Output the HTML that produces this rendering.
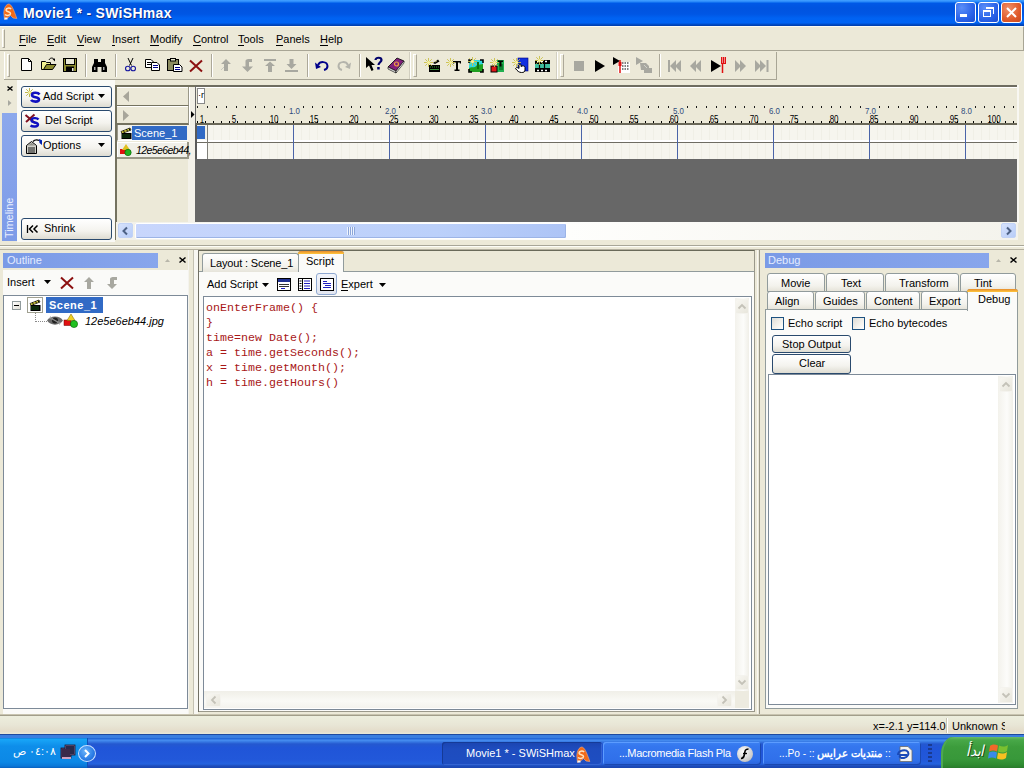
<!DOCTYPE html>
<html><head><meta charset="utf-8">
<style>
*{margin:0;padding:0;box-sizing:border-box}
body{width:1024px;height:768px;overflow:hidden;position:relative;background:#ECE9D8;font-family:"Liberation Sans",sans-serif;font-size:11px;color:#000}
.a{position:absolute}
.t{position:absolute;white-space:pre;line-height:1}
u{text-decoration:none;background:linear-gradient(#000,#000) no-repeat 0 100%/100% 1px;padding-bottom:1px}
svg{position:absolute;overflow:visible}
</style></head><body>
<!-- TITLE BAR -->
<div class="a" style="left:0;top:0;width:1024px;height:26px;background:linear-gradient(#3D9DFF 0px,#3A98FF 1px,#1070F0 2.5px,#0058E6 3.5px,#0054E0 8px,#0056E4 14px,#0062F2 18px,#0064F4 23px,#0050D0 24px,#003CA8 26px)"></div>
<svg style="left:3px;top:3px" width="15" height="17" viewBox="0 0 15 17">
<path d="M6 1 C8.5 1.5 10.5 6 13.8 15.5 L10 15 L7.5 12.5 L4.5 15 L1.5 16.5 L0.8 10 C1 5 3 1 6 1 Z" fill="#F26A18" stroke="#F8B080" stroke-width="0.6"/>
<path d="M8.2 6 C6.5 4.5 3 5 3 7 C3 9 7.5 8.5 7.5 10.5 C7.5 12.5 3.5 13 2 11.5" fill="none" stroke="#FFE4C0" stroke-width="1.5"/>
<path d="M1.5 14.5 H4.5 V16.5 H1.5 Z" fill="#F0F8FF"/>
</svg>
<div class="t" style="left:23px;top:6px;font-size:14px;font-weight:bold;color:#fff;letter-spacing:0.3px;text-shadow:1px 1px #0A2F8C">Movie1 * - SWiSHmax</div>
<!-- min -->
<div class="a" style="left:955px;top:2px;width:21px;height:21px;border:1px solid #fff;border-radius:3px;background:radial-gradient(circle at 30% 25%,#5A8EF8,#2A62E8 60%,#1A4CD0)"></div>
<div class="a" style="left:960px;top:14px;width:7px;height:3px;background:#fff"></div>
<!-- max -->
<div class="a" style="left:978px;top:2px;width:21px;height:21px;border:1px solid #fff;border-radius:3px;background:radial-gradient(circle at 30% 25%,#5A8EF8,#2A62E8 60%,#1A4CD0)"></div>
<div class="a" style="left:983px;top:10px;width:8px;height:7px;border:1px solid #fff;border-top-width:2px"></div>
<div class="a" style="left:986px;top:7px;width:8px;height:7px;border:1px solid #fff;border-top-width:2px;border-left:none;border-bottom:none"></div>
<!-- close -->
<div class="a" style="left:1001px;top:2px;width:21px;height:21px;border:1px solid #fff;border-radius:3px;background:radial-gradient(circle at 35% 30%,#F0906A,#E05A2A 60%,#C84A20)"></div>
<svg class="a" style="left:1001px;top:2px" width="21" height="21"><path d="M6 6 L15 15 M15 6 L6 15" stroke="#fff" stroke-width="2"/></svg>

<!-- MENU BAR -->
<div class="a" style="left:0;top:26px;width:1024px;height:25px;background:#ECE9D8;border-top:1px solid #FAFAF2;border-bottom:1px solid #A8A595;border-right:1px solid #A8A595"></div>
<div class="a" style="left:2px;top:29px;width:3px;height:19px;border-left:1px solid #fff;border-top:1px solid #fff;border-right:1px solid #ACA899;border-bottom:1px solid #ACA899"></div>
<div class="t" style="left:19px;top:34px"><u>F</u>ile</div>
<div class="t" style="left:47px;top:34px"><u>E</u>dit</div>
<div class="t" style="left:77px;top:34px"><u>V</u>iew</div>
<div class="t" style="left:112px;top:34px"><u>I</u>nsert</div>
<div class="t" style="left:150px;top:34px"><u>M</u>odify</div>
<div class="t" style="left:193px;top:34px"><u>C</u>ontrol</div>
<div class="t" style="left:238px;top:34px"><u>T</u>ools</div>
<div class="t" style="left:276px;top:34px"><u>P</u>anels</div>
<div class="t" style="left:320px;top:34px"><u>H</u>elp</div>
<!-- TOOLBAR -->
<div class="a" style="left:0;top:52px;width:1024px;height:28px;background:#ECE9D8"></div>
<div class="a" style="left:4px;top:79px;width:773px;height:1px;background:#A8A595"></div>
<div class="a" style="left:4px;top:52px;width:1px;height:27px;background:#fff"></div>
<!-- toolbar 1 frame -->
<div class="a" style="left:4px;top:52px;width:406px;height:27px;border-right:1px solid #D2CFC0"></div>
<div class="a" style="left:7px;top:54px;width:3px;height:23px;border-left:1px solid #fff;border-top:1px solid #fff;border-right:1px solid #ACA899;border-bottom:1px solid #ACA899"></div>
<div class="a" style="left:85px;top:54px;width:2px;height:23px;border-left:1px solid #ACA899;border-right:1px solid #fff"></div>
<div class="a" style="left:115px;top:54px;width:2px;height:23px;border-left:1px solid #ACA899;border-right:1px solid #fff"></div>
<div class="a" style="left:211px;top:54px;width:2px;height:23px;border-left:1px solid #ACA899;border-right:1px solid #fff"></div>
<div class="a" style="left:307px;top:54px;width:2px;height:23px;border-left:1px solid #ACA899;border-right:1px solid #fff"></div>
<div class="a" style="left:359px;top:54px;width:2px;height:23px;border-left:1px solid #ACA899;border-right:1px solid #fff"></div>
<!-- new -->
<svg style="left:21px;top:58px" width="12" height="14"><path d="M0.5 0.5 H7.5 L10.5 3.5 V12.5 H0.5 Z" fill="#fff" stroke="#000"/><path d="M7.5 0.5 V3.5 H10.5" fill="none" stroke="#000"/></svg>
<!-- open -->
<svg style="left:41px;top:57px" width="16" height="15"><path d="M0.5 4.5 H4.5 L5.5 5.5 H9.5 V12.5 H0.5 Z" fill="#F0F090" stroke="#000"/><path d="M2.5 12.5 L5.5 7.5 H15 L11.5 12.5 Z" fill="#8C8C30" stroke="#000"/><path d="M8 3 C9 0.5 12 0.5 13 2.5" fill="none" stroke="#000"/><path d="M11.5 2 L14 4.5 L14 1.5 Z" fill="#000"/></svg>
<!-- save -->
<svg style="left:63px;top:58px" width="14" height="14"><rect x="0.5" y="0.5" width="13" height="13" fill="#8C8C30" stroke="#000"/><rect x="2.5" y="0.5" width="9" height="6" fill="#E8E8D8" stroke="#000"/><rect x="3" y="8.5" width="8" height="5" fill="#000"/><rect x="9" y="10" width="1.6" height="3" fill="#E8E8D8"/></svg>
<!-- find -->
<svg style="left:92px;top:59px" width="15" height="13"><path d="M2 0 H6 V3 H9 V0 H13 V4 L15 8 V13 H9.5 V8 H5.5 V13 H0 V8 L2 4 Z" fill="#000"/><rect x="2" y="8" width="1.5" height="3" fill="#aaa"/><rect x="11" y="8" width="1.5" height="3" fill="#aaa"/></svg>
<!-- cut -->
<svg style="left:125px;top:58px" width="11" height="14"><path d="M3 0 L6.5 7.5 M8 0 L4.5 7.5" stroke="#000" stroke-width="1"/><circle cx="2.8" cy="10.5" r="2.3" fill="none" stroke="#1818A0" stroke-width="1.1"/><circle cx="8.2" cy="10.5" r="2.3" fill="none" stroke="#1818A0" stroke-width="1.1"/></svg>
<!-- copy -->
<svg style="left:145px;top:59px" width="16" height="12"><path d="M0.5 0.5 H6 L8.5 3 V8.5 H0.5 Z" fill="#fff" stroke="#000"/><path d="M2 3.5 H6 M2 5.5 H6" stroke="#000"/><path d="M6.5 3.5 H12 L14.5 6 V11.5 H6.5 Z" fill="#fff" stroke="#000"/><path d="M8 6.5 H13 M8 8.5 H13" stroke="#00008A"/></svg>
<!-- paste -->
<svg style="left:167px;top:58px" width="16" height="14"><rect x="0.5" y="1.5" width="11" height="11" fill="#8C8C60" stroke="#000"/><rect x="3.5" y="0.5" width="5" height="2.5" fill="#E8E8D0" stroke="#000"/><path d="M6.5 6.5 H12.5 L15 9 V13.5 H6.5 Z" fill="#fff" stroke="#000"/><path d="M8 9.5 H13 M8 11.5 H13" stroke="#00008A"/></svg>
<!-- delete -->
<svg style="left:189px;top:60px" width="14" height="12"><path d="M1 0.5 L13 11.5 M13 0.5 L1 11.5" stroke="#8C1010" stroke-width="2"/></svg>
<!-- up/down/top/bottom gray -->
<svg style="left:220px;top:59px" width="12" height="13"><path d="M6 0 L11 5 H8 V12 H4 V5 H1 Z" fill="#A8A8A0"/><path d="M4 8 L1 11" stroke="#C8C8C0"/></svg>
<svg style="left:241px;top:59px" width="13" height="13"><path d="M6.5 13 L1 7.5 H4.5 V2 C4.5 0.5 6 0 9 0 H11 V3 H8 V7.5 H12 Z" fill="#A8A8A0"/></svg>
<svg style="left:264px;top:59px" width="12" height="13"><rect x="0" y="0" width="12" height="2" fill="#A8A8A0"/><path d="M6 2.5 L11 7 H8 V13 H4 V7 H1 Z" fill="#A8A8A0"/></svg>
<svg style="left:285px;top:59px" width="13" height="13"><path d="M6.5 10 L1.5 5 H4.5 V0 H8.5 V5 H11.5 Z" fill="#A8A8A0"/><rect x="0" y="11" width="13" height="2" fill="#A8A8A0"/></svg>
<!-- undo/redo -->
<svg style="left:315px;top:60px" width="14" height="11"><path d="M3 5 C5 1 12 1 12.5 6 C12.5 8 11 9.5 9 10" fill="none" stroke="#00008A" stroke-width="2"/><path d="M0 2.5 L1 9 L6 7 Z" fill="#00008A"/></svg>
<svg style="left:337px;top:60px" width="14" height="11"><path d="M11 5 C9 1 2 1 1.5 6 C1.5 8 3 9.5 5 10" fill="none" stroke="#B4B4AC" stroke-width="2"/><path d="M14 2.5 L13 9 L8 7 Z" fill="#B4B4AC"/></svg>
<!-- help cursor -->
<svg style="left:366px;top:57px" width="17" height="16"><path d="M0 0 L0 11 L3 8.5 L5.5 14 L7.5 13 L5.5 8 H9 Z" fill="#000"/><path d="M9.5 3 C9.5 0 15.5 0 15.5 3 C15.5 5 12.5 5.5 12.5 8" fill="none" stroke="#00006A" stroke-width="2.2"/><rect x="11.2" y="10" width="2.5" height="2.5" fill="#00006A"/></svg>
<!-- help book -->
<svg style="left:388px;top:57px" width="17" height="16"><path d="M0 10 L9 1 L16 4 L8 14 Z" fill="#80207A" stroke="#000" stroke-width="0.8"/><path d="M0 10 L8 14 V16 L0 12 Z" fill="#E0E0E0" stroke="#000" stroke-width="0.6"/><path d="M8 14 L16 4 V6 L8 16 Z" fill="#fff" stroke="#000" stroke-width="0.6"/><circle cx="8.5" cy="7" r="2" fill="none" stroke="#F0A040" stroke-width="1.2"/></svg>

<!-- toolbar 2 -->
<div class="a" style="left:410px;top:52px;width:147px;height:27px;border-left:1px solid #fff;border-right:1px solid #D2CFC0"></div>
<div class="a" style="left:413px;top:54px;width:4px;height:23px;border-left:1px solid #fff;border-top:1px solid #fff;border-right:1px solid #ACA899;border-bottom:1px solid #ACA899"></div>
<svg style="left:429px;top:59px" width="12" height="13"><rect x="0" y="6" width="11" height="7" fill="#000"/><path d="M1 8 H2 M3 8 H4 M5 8 H6 M7 8 H8 M9 8 H10 M1 10.5 H10" stroke="#40A040" stroke-width="0.9"/><path d="M4 4 L9 0.5 L10.5 2.5 L6 5 Z" fill="#000"/><path d="M6 3 L8 1.8" stroke="#E0E080" stroke-width="0.8"/></svg>
<svg style="left:424px;top:58px" width="9" height="9"><path d="M4.5 0 V9 M0 4.5 H9 M1.2 1.2 L7.8 7.8 M7.8 1.2 L1.2 7.8" stroke="#C8C048" stroke-width="0.9"/><circle cx="4.5" cy="4.5" r="1.6" fill="#F8F0A0"/></svg>
<svg style="left:453px;top:61px" width="8" height="10"><path d="M0 0 H8 V2.5 H6.8 V1.5 H5 V8.5 H6.5 V10 H1.5 V8.5 H3 V1.5 H1.2 V2.5 H0 Z" fill="#000"/></svg>
<svg style="left:446px;top:58px" width="9" height="9"><path d="M4.5 0 V9 M0 4.5 H9 M1.2 1.2 L7.8 7.8 M7.8 1.2 L1.2 7.8" stroke="#C8C048" stroke-width="0.9"/><circle cx="4.5" cy="4.5" r="1.6" fill="#F8F0A0"/></svg>
<svg style="left:469px;top:60px" width="14" height="12"><rect x="0" y="0" width="14" height="12" fill="#30D8E0"/><path d="M0 8 C3 6 5 9 8 5 L14 4 V12 H0 Z" fill="#20A020"/><rect x="8" y="2" width="2" height="7" fill="#107010"/><path d="M0 3 V0 H3 M11 0 H14 V3 M14 9 V12 H11 M3 12 H0 V9" fill="none" stroke="#000" stroke-width="1.6"/></svg>
<svg style="left:468px;top:57px" width="9" height="9"><path d="M4.5 0 V9 M0 4.5 H9 M1.2 1.2 L7.8 7.8 M7.8 1.2 L1.2 7.8" stroke="#C8C048" stroke-width="0.9"/><circle cx="4.5" cy="4.5" r="1.6" fill="#F8F0A0"/></svg>
<svg style="left:491px;top:60px" width="14" height="12"><rect x="6" y="0" width="7" height="12" fill="#20B050"/><rect x="8" y="4" width="4" height="6" fill="#108030"/><path d="M7 0.5 H12 V2 H10.5 V6.5 H8.5 V2 H7 Z" fill="#000"/><rect x="0" y="6" width="6" height="6" fill="#E01818" stroke="#000" stroke-width="1"/></svg>
<svg style="left:490px;top:58px" width="9" height="9"><path d="M4.5 0 V9 M0 4.5 H9 M1.2 1.2 L7.8 7.8 M7.8 1.2 L1.2 7.8" stroke="#C8C048" stroke-width="0.9"/><circle cx="4.5" cy="4.5" r="1.6" fill="#F8F0A0"/></svg>
<svg style="left:514px;top:57px" width="15" height="16"><rect x="4" y="1" width="10" height="13" fill="#1030E0" stroke="#000080" stroke-width="0.6"/><path d="M5 8 C5 6.5 7 6.5 7 8 V9.5 C8 8.5 11 8.5 11 10.5 V13 C11 15 9.5 15.5 7.5 15.5 C5 15.5 3.5 14 1.5 11.5 C2.5 10 4 10.5 5 11.5 Z" fill="#fff" stroke="#000" stroke-width="1"/></svg>
<svg style="left:512px;top:58px" width="9" height="9"><path d="M4.5 0 V9 M0 4.5 H9 M1.2 1.2 L7.8 7.8 M7.8 1.2 L1.2 7.8" stroke="#C8C048" stroke-width="0.9"/><circle cx="4.5" cy="4.5" r="1.6" fill="#F8F0A0"/></svg>
<svg style="left:535px;top:60px" width="15" height="12"><rect x="0" y="0" width="15" height="12" fill="#000"/><rect x="0" y="4" width="15" height="4" fill="#40C0A0"/><path d="M2 1.5 H4 M6 1.5 H8 M10 1.5 H12 M2 10.5 H4 M6 10.5 H8 M10 10.5 H12" stroke="#fff" stroke-width="1.5"/><path d="M4.5 4 V8 M9.5 4 V8" stroke="#000" stroke-width="1.2"/></svg>
<svg style="left:535px;top:56px" width="9" height="9"><path d="M4.5 0 V9 M0 4.5 H9 M1.2 1.2 L7.8 7.8 M7.8 1.2 L1.2 7.8" stroke="#C8C048" stroke-width="0.9"/><circle cx="4.5" cy="4.5" r="1.6" fill="#F8F0A0"/></svg>

<!-- toolbar 3 -->
<div class="a" style="left:557px;top:52px;width:220px;height:27px;border-left:1px solid #fff;border-right:1px solid #A8A595"></div>
<div class="a" style="left:560px;top:54px;width:4px;height:23px;border-left:1px solid #fff;border-top:1px solid #fff;border-right:1px solid #ACA899;border-bottom:1px solid #ACA899"></div>
<div class="a" style="left:659px;top:54px;width:2px;height:23px;border-left:1px solid #ACA899;border-right:1px solid #fff"></div>
<div class="a" style="left:574px;top:61px;width:10px;height:10px;background:#A8A8A0"></div>
<svg style="left:595px;top:60px" width="11" height="12"><path d="M0 0 L10 6 L0 12 Z" fill="#000"/></svg>
<svg style="left:613px;top:57px" width="18" height="16"><path d="M0 0 L7 4 L0 8 Z" fill="#000"/><rect x="5" y="5" width="12" height="11" fill="#fff"/><path d="M9 6 H16 M9 9 H16 M9 12 H16" stroke="#000" stroke-dasharray="1.5 1"/><path d="M7 3 V16" stroke="#E01010" stroke-width="1.5"/><rect x="5.5" y="5" width="3" height="4" fill="#E01010"/></svg>
<svg style="left:636px;top:57px" width="17" height="16"><path d="M0 0 L7 4 L0 8 Z" fill="#A8A8A0"/><path d="M4 6 H10 L13 9 V11 H16 V16 H8 V13 H5 Z" fill="#A8A8A0"/><path d="M8 8 L11 11" stroke="#D0D0C8"/></svg>
<svg style="left:668px;top:60px" width="14" height="12"><rect x="0" y="0" width="2" height="12" fill="#A8A8A0"/><path d="M2 6 L8 0 V12 Z M7 6 L13 0 V12 Z" fill="#A8A8A0"/></svg>
<svg style="left:690px;top:60px" width="12" height="12"><path d="M0 6 L6 0 V12 Z M5 6 L11 0 V12 Z" fill="#A8A8A0"/></svg>
<svg style="left:711px;top:57px" width="16" height="16"><path d="M0 3 L10 9 L0 15 Z" fill="#000"/><path d="M11.5 2 V16" stroke="#E01010" stroke-width="1.5"/><rect x="10" y="0" width="5" height="7" fill="#E01010"/><path d="M11 1 H14 M11 3 H14 M11 5 H14" stroke="#fff" stroke-dasharray="1 1"/></svg>
<svg style="left:735px;top:60px" width="11" height="12"><path d="M0 0 L6 6 L0 12 Z M5 0 L11 6 L5 12 Z" fill="#A8A8A0"/></svg>
<svg style="left:755px;top:60px" width="14" height="12"><path d="M0 0 L6 6 L0 12 Z M5 0 L11 6 L5 12 Z" fill="#A8A8A0"/><rect x="11.5" y="0" width="2" height="12" fill="#A8A8A0"/></svg>
<!-- TIMELINE -->
<div class="a" style="left:0;top:80px;width:1024px;height:170px;background:#ECE9D8"></div>
<svg style="left:7px;top:86px" width="6" height="5"><path d="M0.5 0.5 L5.5 4.5 M5.5 0.5 L0.5 4.5" stroke="#000" stroke-width="1.4"/></svg>
<svg style="left:8px;top:100px" width="4" height="6"><path d="M0 0 L3.5 3 L0 6 Z" fill="#A8A8A0"/></svg>
<div class="a" style="left:2px;top:113px;width:15px;height:128px;background:linear-gradient(#8CA8EC,#7D9BE8)"></div>
<div class="t" style="left:4px;top:238px;transform:rotate(-90deg);transform-origin:0 0;color:#E8EEFF;font-size:11px;letter-spacing:-0.1px">Timeline</div>
<!-- button pane -->
<div class="a" style="left:17px;top:80px;width:98px;height:162px;background:#FAFAF6"></div>
<div class="a" style="left:21px;top:86px;width:91px;height:22px;border:1px solid #2A4A6E;border-radius:3px;background:linear-gradient(#FFFFFF,#F4F3EE 60%,#DEDCD2)"></div>
<div class="a" style="left:21px;top:110px;width:91px;height:22px;border:1px solid #2A4A6E;border-radius:3px;background:linear-gradient(#FFFFFF,#F4F3EE 60%,#DEDCD2)"></div>
<div class="a" style="left:21px;top:135px;width:91px;height:22px;border:1px solid #2A4A6E;border-radius:3px;background:linear-gradient(#FFFFFF,#F4F3EE 60%,#DEDCD2)"></div>
<div class="a" style="left:21px;top:218px;width:91px;height:22px;border:1px solid #2A4A6E;border-radius:3px;background:linear-gradient(#FFFFFF,#F4F3EE 60%,#DEDCD2)"></div>
<div class="t" style="left:43px;top:91px">Add Script</div>
<div class="t" style="left:45px;top:115px">Del Script</div>
<div class="t" style="left:43px;top:140px">Options</div>
<div class="t" style="left:44px;top:223px">Shrink</div>
<svg style="left:98px;top:94px" width="7" height="4"><path d="M0 0 H7 L3.5 4 Z" fill="#000"/></svg>
<svg style="left:98px;top:143px" width="7" height="4"><path d="M0 0 H7 L3.5 4 Z" fill="#000"/></svg>
<!-- add script icon -->
<svg style="left:25px;top:88px" width="9" height="9"><path d="M4.5 0 V9 M0 4.5 H9 M1.2 1.2 L7.8 7.8 M7.8 1.2 L1.2 7.8" stroke="#B8B040" stroke-width="0.9"/><circle cx="4.5" cy="4.5" r="1.5" fill="#F4F0A0"/></svg>
<svg style="left:25px;top:88px" width="16" height="15"><path d="M14.5 6.5 C13 4 7 4 7 7 C7 10 14 8.5 14 11.5 C14 14.5 7.5 14 6 12" fill="none" stroke="#1010C0" stroke-width="2.6"/></svg>
<!-- del script icon -->
<svg style="left:25px;top:114px" width="16" height="14"><path d="M0.5 1 L10 9 M9.5 0.5 L1 8" stroke="#801020" stroke-width="2"/><path d="M13.5 5.5 C12 3.5 6.5 3.5 6.5 6.5 C6.5 9 13 8 13 10.5 C13 13 7.5 13 5.5 11.5" fill="none" stroke="#1010C0" stroke-width="2.4"/></svg>
<!-- options icon -->
<svg style="left:26px;top:139px" width="17" height="15"><path d="M0.5 6.5 L5.5 2.5 L10.5 6.5 V14.5 H0.5 Z" fill="#D0D0C8" stroke="#000"/><path d="M2 6.5 L5.5 3.8 L9 6.5 Z" fill="#909088"/><path d="M2 9 H9 M2 11 H9 M2 13 H9" stroke="#000" stroke-width="0.9"/><path d="M7 2.5 C8.5 0.8 11 0.5 13.5 1.5" fill="none" stroke="#000" stroke-width="1.2"/><path d="M13 0 L16 1.2 V6 L13.5 4 Z" fill="#0020B0"/></svg>
<!-- shrink icon -->
<svg style="left:27px;top:225px" width="12" height="8"><path d="M0.5 0 V8" stroke="#000" stroke-width="1.3"/><path d="M6 0.5 L2.5 4 L6 7.5 M10.5 0.5 L7 4 L10.5 7.5" fill="none" stroke="#000" stroke-width="1.5"/></svg>

<!-- layers pane -->
<div class="a" style="left:115px;top:85px;width:81px;height:138px;background:#ECE9D8;border-left:2px solid #74725F;border-top:2px solid #74725F"></div>
<div class="a" style="left:115px;top:222px;width:2px;height:18px;background:#74725F"></div>
<div class="a" style="left:117px;top:87px;width:72px;height:19px;background:#ECE9D8;border-right:1px solid #9A9888;border-bottom:1px solid #74725F;box-shadow:inset 0 1px #fff"></div>
<div class="a" style="left:117px;top:106px;width:72px;height:19px;background:#ECE9D8;border-right:1px solid #9A9888;border-bottom:2px solid #74725F;box-shadow:inset 0 1px #fff"></div>
<svg style="left:123px;top:91px" width="6" height="11"><path d="M6 0 L0 5.5 L6 11 Z" fill="#A8A69A"/></svg>
<svg style="left:123px;top:110px" width="6" height="11"><path d="M0 0 L6 5.5 L0 11 Z" fill="#A8A69A"/></svg>
<div class="a" style="left:189px;top:87px;width:7px;height:38px;background:#F2F0E6;border-left:1px solid #fff"></div>
<div class="a" style="left:188px;top:125px;width:7px;height:98px;background:#F4F2EA"></div>
<!-- layer rows -->
<div class="a" style="left:117px;top:125px;width:71px;height:16px;background:#F2F1EA;border-bottom:1px solid #fff;border-left:1px solid #9A9888"></div>
<div class="a" style="left:117px;top:142px;width:72px;height:17px;background:#F0EFE8;border-right:2px solid #9A9888;border-bottom:2px solid #9A9888;box-shadow:inset 1px 1px #fff"></div>
<div class="a" style="left:132px;top:126px;width:55px;height:14px;background:#316AC5"></div>
<div class="t" style="left:134px;top:128px;color:#fff">Scene_1</div>
<div class="t" style="left:136px;top:145px;font-style:italic;font-size:10.5px;letter-spacing:-0.6px">12e5e6eb44,</div>
<svg style="left:120px;top:127px" width="12" height="12"><path d="M1 4.5 L10 1 L11 3 L2 6.5 Z" fill="#E8E040" stroke="#000" stroke-width="0.7"/><path d="M3.5 3.5 L4.5 5.5 M6.5 2.3 L7.5 4.3 M9 1.4 L10 3.4" stroke="#000" stroke-width="1"/><rect x="1.5" y="6" width="10" height="6" fill="#000"/><path d="M2.5 8 H10.5 M2.5 10 H10.5" stroke="#30B030" stroke-dasharray="1 1" stroke-width="0.9"/></svg>
<svg style="left:120px;top:144px" width="12" height="12"><rect x="0" y="5" width="6" height="5" fill="#E01010"/><path d="M6 0 L10 6 H2 Z" fill="#E0C020"/><circle cx="8" cy="8.5" r="3.2" fill="#20B020" stroke="#006000" stroke-width="0.6"/></svg>

<!-- frames area -->
<div class="a" style="left:195px;top:86px;width:823px;height:137px;background:#676767"></div>
<div class="a" style="left:196px;top:85px;width:821px;height:39px;background:#ECE9D8;border-top:2px solid #6E6C60;box-shadow:inset 0 1px #fff"></div>
<div class="a" style="left:1017px;top:85px;width:2px;height:138px;background:#F8F7F2"></div>
<div class="a" style="left:196px;top:123px;width:821px;height:2px;background:#6A6858"></div>
<div class="a" style="left:197px;top:88px;width:8px;height:16px;background:#fff;border:1px solid #888"></div>
<div class="t" style="left:198px;top:91px;font-size:9px">·r</div>
<svg style="left:191px;top:111px" width="4" height="7"><path d="M0 0 L3.5 3.5 L0 7 Z" fill="#000"/></svg>
<!-- frame rows -->
<div class="a" style="left:196px;top:125px;width:821px;height:34px;background:#6E6C62"></div>
<div class="a" style="left:197px;top:125px;width:820px;height:17px;background:repeating-linear-gradient(90deg,#F0EFE6 0px,#F0EFE6 1px,#F6F5EE 1px,#F6F5EE 8px);border-bottom:2px solid #fff"></div>
<div class="a" style="left:197px;top:143px;width:820px;height:16px;background:repeating-linear-gradient(90deg,#F0EFE6 0px,#F0EFE6 1px,#F6F5EE 1px,#F6F5EE 8px)"></div>
<div class="a" style="left:195px;top:125px;width:2px;height:34px;background:#5A5A5A"></div>
<div class="a" style="left:197px;top:126px;width:8px;height:13px;background:#316AC5"></div>
<div class="a" style="left:197px;top:143px;width:10px;height:16px;background:#fff"></div>
<div class="a" style="left:207px;top:125px;width:1px;height:34px;background:#80807A"></div>
<div id="vlines"></div>
<!-- ruler -->
<div id="ruler"></div>
<div class="a" style="left:197px;top:106px;width:1px;height:2px;background:#1A1A1A"></div>
<div class="a" style="left:207px;top:106px;width:1px;height:2px;background:#1A1A1A"></div>
<div class="a" style="left:216px;top:106px;width:1px;height:2px;background:#1A1A1A"></div>
<div class="a" style="left:226px;top:106px;width:1px;height:2px;background:#1A1A1A"></div>
<div class="a" style="left:236px;top:106px;width:1px;height:2px;background:#1A1A1A"></div>
<div class="a" style="left:245px;top:106px;width:1px;height:2px;background:#1A1A1A"></div>
<div class="a" style="left:255px;top:106px;width:1px;height:2px;background:#1A1A1A"></div>
<div class="a" style="left:264px;top:106px;width:1px;height:2px;background:#1A1A1A"></div>
<div class="a" style="left:274px;top:106px;width:1px;height:2px;background:#1A1A1A"></div>
<div class="a" style="left:284px;top:106px;width:1px;height:2px;background:#1A1A1A"></div>
<div class="a" style="left:303px;top:106px;width:1px;height:2px;background:#1A1A1A"></div>
<div class="a" style="left:312px;top:106px;width:1px;height:2px;background:#1A1A1A"></div>
<div class="a" style="left:322px;top:106px;width:1px;height:2px;background:#1A1A1A"></div>
<div class="a" style="left:332px;top:106px;width:1px;height:2px;background:#1A1A1A"></div>
<div class="a" style="left:341px;top:106px;width:1px;height:2px;background:#1A1A1A"></div>
<div class="a" style="left:351px;top:106px;width:1px;height:2px;background:#1A1A1A"></div>
<div class="a" style="left:360px;top:106px;width:1px;height:2px;background:#1A1A1A"></div>
<div class="a" style="left:370px;top:106px;width:1px;height:2px;background:#1A1A1A"></div>
<div class="a" style="left:380px;top:106px;width:1px;height:2px;background:#1A1A1A"></div>
<div class="a" style="left:399px;top:106px;width:1px;height:2px;background:#1A1A1A"></div>
<div class="a" style="left:408px;top:106px;width:1px;height:2px;background:#1A1A1A"></div>
<div class="a" style="left:418px;top:106px;width:1px;height:2px;background:#1A1A1A"></div>
<div class="a" style="left:428px;top:106px;width:1px;height:2px;background:#1A1A1A"></div>
<div class="a" style="left:437px;top:106px;width:1px;height:2px;background:#1A1A1A"></div>
<div class="a" style="left:447px;top:106px;width:1px;height:2px;background:#1A1A1A"></div>
<div class="a" style="left:456px;top:106px;width:1px;height:2px;background:#1A1A1A"></div>
<div class="a" style="left:466px;top:106px;width:1px;height:2px;background:#1A1A1A"></div>
<div class="a" style="left:476px;top:106px;width:1px;height:2px;background:#1A1A1A"></div>
<div class="a" style="left:495px;top:106px;width:1px;height:2px;background:#1A1A1A"></div>
<div class="a" style="left:504px;top:106px;width:1px;height:2px;background:#1A1A1A"></div>
<div class="a" style="left:514px;top:106px;width:1px;height:2px;background:#1A1A1A"></div>
<div class="a" style="left:524px;top:106px;width:1px;height:2px;background:#1A1A1A"></div>
<div class="a" style="left:533px;top:106px;width:1px;height:2px;background:#1A1A1A"></div>
<div class="a" style="left:543px;top:106px;width:1px;height:2px;background:#1A1A1A"></div>
<div class="a" style="left:552px;top:106px;width:1px;height:2px;background:#1A1A1A"></div>
<div class="a" style="left:562px;top:106px;width:1px;height:2px;background:#1A1A1A"></div>
<div class="a" style="left:572px;top:106px;width:1px;height:2px;background:#1A1A1A"></div>
<div class="a" style="left:591px;top:106px;width:1px;height:2px;background:#1A1A1A"></div>
<div class="a" style="left:600px;top:106px;width:1px;height:2px;background:#1A1A1A"></div>
<div class="a" style="left:610px;top:106px;width:1px;height:2px;background:#1A1A1A"></div>
<div class="a" style="left:620px;top:106px;width:1px;height:2px;background:#1A1A1A"></div>
<div class="a" style="left:629px;top:106px;width:1px;height:2px;background:#1A1A1A"></div>
<div class="a" style="left:639px;top:106px;width:1px;height:2px;background:#1A1A1A"></div>
<div class="a" style="left:648px;top:106px;width:1px;height:2px;background:#1A1A1A"></div>
<div class="a" style="left:658px;top:106px;width:1px;height:2px;background:#1A1A1A"></div>
<div class="a" style="left:668px;top:106px;width:1px;height:2px;background:#1A1A1A"></div>
<div class="a" style="left:687px;top:106px;width:1px;height:2px;background:#1A1A1A"></div>
<div class="a" style="left:696px;top:106px;width:1px;height:2px;background:#1A1A1A"></div>
<div class="a" style="left:706px;top:106px;width:1px;height:2px;background:#1A1A1A"></div>
<div class="a" style="left:716px;top:106px;width:1px;height:2px;background:#1A1A1A"></div>
<div class="a" style="left:725px;top:106px;width:1px;height:2px;background:#1A1A1A"></div>
<div class="a" style="left:735px;top:106px;width:1px;height:2px;background:#1A1A1A"></div>
<div class="a" style="left:744px;top:106px;width:1px;height:2px;background:#1A1A1A"></div>
<div class="a" style="left:754px;top:106px;width:1px;height:2px;background:#1A1A1A"></div>
<div class="a" style="left:764px;top:106px;width:1px;height:2px;background:#1A1A1A"></div>
<div class="a" style="left:783px;top:106px;width:1px;height:2px;background:#1A1A1A"></div>
<div class="a" style="left:792px;top:106px;width:1px;height:2px;background:#1A1A1A"></div>
<div class="a" style="left:802px;top:106px;width:1px;height:2px;background:#1A1A1A"></div>
<div class="a" style="left:812px;top:106px;width:1px;height:2px;background:#1A1A1A"></div>
<div class="a" style="left:821px;top:106px;width:1px;height:2px;background:#1A1A1A"></div>
<div class="a" style="left:831px;top:106px;width:1px;height:2px;background:#1A1A1A"></div>
<div class="a" style="left:840px;top:106px;width:1px;height:2px;background:#1A1A1A"></div>
<div class="a" style="left:850px;top:106px;width:1px;height:2px;background:#1A1A1A"></div>
<div class="a" style="left:860px;top:106px;width:1px;height:2px;background:#1A1A1A"></div>
<div class="a" style="left:879px;top:106px;width:1px;height:2px;background:#1A1A1A"></div>
<div class="a" style="left:888px;top:106px;width:1px;height:2px;background:#1A1A1A"></div>
<div class="a" style="left:898px;top:106px;width:1px;height:2px;background:#1A1A1A"></div>
<div class="a" style="left:908px;top:106px;width:1px;height:2px;background:#1A1A1A"></div>
<div class="a" style="left:917px;top:106px;width:1px;height:2px;background:#1A1A1A"></div>
<div class="a" style="left:927px;top:106px;width:1px;height:2px;background:#1A1A1A"></div>
<div class="a" style="left:936px;top:106px;width:1px;height:2px;background:#1A1A1A"></div>
<div class="a" style="left:946px;top:106px;width:1px;height:2px;background:#1A1A1A"></div>
<div class="a" style="left:956px;top:106px;width:1px;height:2px;background:#1A1A1A"></div>
<div class="a" style="left:975px;top:106px;width:1px;height:2px;background:#1A1A1A"></div>
<div class="a" style="left:984px;top:106px;width:1px;height:2px;background:#1A1A1A"></div>
<div class="a" style="left:994px;top:106px;width:1px;height:2px;background:#1A1A1A"></div>
<div class="a" style="left:1004px;top:106px;width:1px;height:2px;background:#1A1A1A"></div>
<div class="a" style="left:1013px;top:106px;width:1px;height:2px;background:#1A1A1A"></div>
<div class="a" style="left:197px;top:121px;width:1px;height:2px;background:#000"></div>
<div class="a" style="left:205px;top:121px;width:1px;height:2px;background:#000"></div>
<div class="a" style="left:213px;top:121px;width:1px;height:2px;background:#000"></div>
<div class="a" style="left:221px;top:121px;width:1px;height:2px;background:#000"></div>
<div class="a" style="left:229px;top:121px;width:1px;height:2px;background:#000"></div>
<div class="a" style="left:237px;top:121px;width:1px;height:2px;background:#000"></div>
<div class="a" style="left:245px;top:121px;width:1px;height:2px;background:#000"></div>
<div class="a" style="left:253px;top:121px;width:1px;height:2px;background:#000"></div>
<div class="a" style="left:261px;top:121px;width:1px;height:2px;background:#000"></div>
<div class="a" style="left:269px;top:121px;width:1px;height:2px;background:#000"></div>
<div class="a" style="left:277px;top:121px;width:1px;height:2px;background:#000"></div>
<div class="a" style="left:285px;top:121px;width:1px;height:2px;background:#000"></div>
<div class="a" style="left:293px;top:121px;width:1px;height:2px;background:#000"></div>
<div class="a" style="left:301px;top:121px;width:1px;height:2px;background:#000"></div>
<div class="a" style="left:309px;top:121px;width:1px;height:2px;background:#000"></div>
<div class="a" style="left:317px;top:121px;width:1px;height:2px;background:#000"></div>
<div class="a" style="left:325px;top:121px;width:1px;height:2px;background:#000"></div>
<div class="a" style="left:333px;top:121px;width:1px;height:2px;background:#000"></div>
<div class="a" style="left:341px;top:121px;width:1px;height:2px;background:#000"></div>
<div class="a" style="left:349px;top:121px;width:1px;height:2px;background:#000"></div>
<div class="a" style="left:357px;top:121px;width:1px;height:2px;background:#000"></div>
<div class="a" style="left:365px;top:121px;width:1px;height:2px;background:#000"></div>
<div class="a" style="left:373px;top:121px;width:1px;height:2px;background:#000"></div>
<div class="a" style="left:381px;top:121px;width:1px;height:2px;background:#000"></div>
<div class="a" style="left:389px;top:121px;width:1px;height:2px;background:#000"></div>
<div class="a" style="left:397px;top:121px;width:1px;height:2px;background:#000"></div>
<div class="a" style="left:405px;top:121px;width:1px;height:2px;background:#000"></div>
<div class="a" style="left:413px;top:121px;width:1px;height:2px;background:#000"></div>
<div class="a" style="left:421px;top:121px;width:1px;height:2px;background:#000"></div>
<div class="a" style="left:429px;top:121px;width:1px;height:2px;background:#000"></div>
<div class="a" style="left:437px;top:121px;width:1px;height:2px;background:#000"></div>
<div class="a" style="left:445px;top:121px;width:1px;height:2px;background:#000"></div>
<div class="a" style="left:453px;top:121px;width:1px;height:2px;background:#000"></div>
<div class="a" style="left:461px;top:121px;width:1px;height:2px;background:#000"></div>
<div class="a" style="left:469px;top:121px;width:1px;height:2px;background:#000"></div>
<div class="a" style="left:477px;top:121px;width:1px;height:2px;background:#000"></div>
<div class="a" style="left:485px;top:121px;width:1px;height:2px;background:#000"></div>
<div class="a" style="left:493px;top:121px;width:1px;height:2px;background:#000"></div>
<div class="a" style="left:501px;top:121px;width:1px;height:2px;background:#000"></div>
<div class="a" style="left:509px;top:121px;width:1px;height:2px;background:#000"></div>
<div class="a" style="left:517px;top:121px;width:1px;height:2px;background:#000"></div>
<div class="a" style="left:525px;top:121px;width:1px;height:2px;background:#000"></div>
<div class="a" style="left:533px;top:121px;width:1px;height:2px;background:#000"></div>
<div class="a" style="left:541px;top:121px;width:1px;height:2px;background:#000"></div>
<div class="a" style="left:549px;top:121px;width:1px;height:2px;background:#000"></div>
<div class="a" style="left:557px;top:121px;width:1px;height:2px;background:#000"></div>
<div class="a" style="left:565px;top:121px;width:1px;height:2px;background:#000"></div>
<div class="a" style="left:573px;top:121px;width:1px;height:2px;background:#000"></div>
<div class="a" style="left:581px;top:121px;width:1px;height:2px;background:#000"></div>
<div class="a" style="left:589px;top:121px;width:1px;height:2px;background:#000"></div>
<div class="a" style="left:597px;top:121px;width:1px;height:2px;background:#000"></div>
<div class="a" style="left:605px;top:121px;width:1px;height:2px;background:#000"></div>
<div class="a" style="left:613px;top:121px;width:1px;height:2px;background:#000"></div>
<div class="a" style="left:621px;top:121px;width:1px;height:2px;background:#000"></div>
<div class="a" style="left:629px;top:121px;width:1px;height:2px;background:#000"></div>
<div class="a" style="left:637px;top:121px;width:1px;height:2px;background:#000"></div>
<div class="a" style="left:645px;top:121px;width:1px;height:2px;background:#000"></div>
<div class="a" style="left:653px;top:121px;width:1px;height:2px;background:#000"></div>
<div class="a" style="left:661px;top:121px;width:1px;height:2px;background:#000"></div>
<div class="a" style="left:669px;top:121px;width:1px;height:2px;background:#000"></div>
<div class="a" style="left:677px;top:121px;width:1px;height:2px;background:#000"></div>
<div class="a" style="left:685px;top:121px;width:1px;height:2px;background:#000"></div>
<div class="a" style="left:693px;top:121px;width:1px;height:2px;background:#000"></div>
<div class="a" style="left:701px;top:121px;width:1px;height:2px;background:#000"></div>
<div class="a" style="left:709px;top:121px;width:1px;height:2px;background:#000"></div>
<div class="a" style="left:717px;top:121px;width:1px;height:2px;background:#000"></div>
<div class="a" style="left:725px;top:121px;width:1px;height:2px;background:#000"></div>
<div class="a" style="left:733px;top:121px;width:1px;height:2px;background:#000"></div>
<div class="a" style="left:741px;top:121px;width:1px;height:2px;background:#000"></div>
<div class="a" style="left:749px;top:121px;width:1px;height:2px;background:#000"></div>
<div class="a" style="left:757px;top:121px;width:1px;height:2px;background:#000"></div>
<div class="a" style="left:765px;top:121px;width:1px;height:2px;background:#000"></div>
<div class="a" style="left:773px;top:121px;width:1px;height:2px;background:#000"></div>
<div class="a" style="left:781px;top:121px;width:1px;height:2px;background:#000"></div>
<div class="a" style="left:789px;top:121px;width:1px;height:2px;background:#000"></div>
<div class="a" style="left:797px;top:121px;width:1px;height:2px;background:#000"></div>
<div class="a" style="left:805px;top:121px;width:1px;height:2px;background:#000"></div>
<div class="a" style="left:813px;top:121px;width:1px;height:2px;background:#000"></div>
<div class="a" style="left:821px;top:121px;width:1px;height:2px;background:#000"></div>
<div class="a" style="left:829px;top:121px;width:1px;height:2px;background:#000"></div>
<div class="a" style="left:837px;top:121px;width:1px;height:2px;background:#000"></div>
<div class="a" style="left:845px;top:121px;width:1px;height:2px;background:#000"></div>
<div class="a" style="left:853px;top:121px;width:1px;height:2px;background:#000"></div>
<div class="a" style="left:861px;top:121px;width:1px;height:2px;background:#000"></div>
<div class="a" style="left:869px;top:121px;width:1px;height:2px;background:#000"></div>
<div class="a" style="left:877px;top:121px;width:1px;height:2px;background:#000"></div>
<div class="a" style="left:885px;top:121px;width:1px;height:2px;background:#000"></div>
<div class="a" style="left:893px;top:121px;width:1px;height:2px;background:#000"></div>
<div class="a" style="left:901px;top:121px;width:1px;height:2px;background:#000"></div>
<div class="a" style="left:909px;top:121px;width:1px;height:2px;background:#000"></div>
<div class="a" style="left:917px;top:121px;width:1px;height:2px;background:#000"></div>
<div class="a" style="left:925px;top:121px;width:1px;height:2px;background:#000"></div>
<div class="a" style="left:933px;top:121px;width:1px;height:2px;background:#000"></div>
<div class="a" style="left:941px;top:121px;width:1px;height:2px;background:#000"></div>
<div class="a" style="left:949px;top:121px;width:1px;height:2px;background:#000"></div>
<div class="a" style="left:957px;top:121px;width:1px;height:2px;background:#000"></div>
<div class="a" style="left:965px;top:121px;width:1px;height:2px;background:#000"></div>
<div class="a" style="left:973px;top:121px;width:1px;height:2px;background:#000"></div>
<div class="a" style="left:981px;top:121px;width:1px;height:2px;background:#000"></div>
<div class="a" style="left:989px;top:121px;width:1px;height:2px;background:#000"></div>
<div class="a" style="left:997px;top:121px;width:1px;height:2px;background:#000"></div>
<div class="a" style="left:1005px;top:121px;width:1px;height:2px;background:#000"></div>
<div class="a" style="left:1013px;top:121px;width:1px;height:2px;background:#000"></div>
<div class="t" style="left:182px;top:115px;width:40px;text-align:center;font-size:10px;letter-spacing:-0.2px;transform:scaleX(0.8)">1</div>
<div class="t" style="left:214px;top:115px;width:40px;text-align:center;font-size:10px;letter-spacing:-0.2px;transform:scaleX(0.8)">5</div>
<div class="t" style="left:254px;top:115px;width:40px;text-align:center;font-size:10px;letter-spacing:-0.2px;transform:scaleX(0.8)">10</div>
<div class="t" style="left:294px;top:115px;width:40px;text-align:center;font-size:10px;letter-spacing:-0.2px;transform:scaleX(0.8)">15</div>
<div class="t" style="left:334px;top:115px;width:40px;text-align:center;font-size:10px;letter-spacing:-0.2px;transform:scaleX(0.8)">20</div>
<div class="t" style="left:374px;top:115px;width:40px;text-align:center;font-size:10px;letter-spacing:-0.2px;transform:scaleX(0.8)">25</div>
<div class="t" style="left:414px;top:115px;width:40px;text-align:center;font-size:10px;letter-spacing:-0.2px;transform:scaleX(0.8)">30</div>
<div class="t" style="left:454px;top:115px;width:40px;text-align:center;font-size:10px;letter-spacing:-0.2px;transform:scaleX(0.8)">35</div>
<div class="t" style="left:494px;top:115px;width:40px;text-align:center;font-size:10px;letter-spacing:-0.2px;transform:scaleX(0.8)">40</div>
<div class="t" style="left:534px;top:115px;width:40px;text-align:center;font-size:10px;letter-spacing:-0.2px;transform:scaleX(0.8)">45</div>
<div class="t" style="left:574px;top:115px;width:40px;text-align:center;font-size:10px;letter-spacing:-0.2px;transform:scaleX(0.8)">50</div>
<div class="t" style="left:614px;top:115px;width:40px;text-align:center;font-size:10px;letter-spacing:-0.2px;transform:scaleX(0.8)">55</div>
<div class="t" style="left:654px;top:115px;width:40px;text-align:center;font-size:10px;letter-spacing:-0.2px;transform:scaleX(0.8)">60</div>
<div class="t" style="left:694px;top:115px;width:40px;text-align:center;font-size:10px;letter-spacing:-0.2px;transform:scaleX(0.8)">65</div>
<div class="t" style="left:734px;top:115px;width:40px;text-align:center;font-size:10px;letter-spacing:-0.2px;transform:scaleX(0.8)">70</div>
<div class="t" style="left:774px;top:115px;width:40px;text-align:center;font-size:10px;letter-spacing:-0.2px;transform:scaleX(0.8)">75</div>
<div class="t" style="left:814px;top:115px;width:40px;text-align:center;font-size:10px;letter-spacing:-0.2px;transform:scaleX(0.8)">80</div>
<div class="t" style="left:854px;top:115px;width:40px;text-align:center;font-size:10px;letter-spacing:-0.2px;transform:scaleX(0.8)">85</div>
<div class="t" style="left:894px;top:115px;width:40px;text-align:center;font-size:10px;letter-spacing:-0.2px;transform:scaleX(0.8)">90</div>
<div class="t" style="left:934px;top:115px;width:40px;text-align:center;font-size:10px;letter-spacing:-0.2px;transform:scaleX(0.8)">95</div>
<div class="t" style="left:974px;top:115px;width:40px;text-align:center;font-size:10px;letter-spacing:-0.2px;transform:scaleX(0.8)">100</div>
<div class="t" style="left:289px;top:107px;font-size:9px;letter-spacing:-0.1px;transform:scaleX(0.88);transform-origin:0 0;color:#2E4C7C">1.0</div>
<div class="a" style="left:293px;top:125px;width:1px;height:34px;background:#4A64A8"></div>
<div class="t" style="left:385px;top:107px;font-size:9px;letter-spacing:-0.1px;transform:scaleX(0.88);transform-origin:0 0;color:#2E4C7C">2.0</div>
<div class="a" style="left:389px;top:125px;width:1px;height:34px;background:#4A64A8"></div>
<div class="t" style="left:481px;top:107px;font-size:9px;letter-spacing:-0.1px;transform:scaleX(0.88);transform-origin:0 0;color:#2E4C7C">3.0</div>
<div class="a" style="left:485px;top:125px;width:1px;height:34px;background:#4A64A8"></div>
<div class="t" style="left:577px;top:107px;font-size:9px;letter-spacing:-0.1px;transform:scaleX(0.88);transform-origin:0 0;color:#2E4C7C">4.0</div>
<div class="a" style="left:581px;top:125px;width:1px;height:34px;background:#4A64A8"></div>
<div class="t" style="left:673px;top:107px;font-size:9px;letter-spacing:-0.1px;transform:scaleX(0.88);transform-origin:0 0;color:#2E4C7C">5.0</div>
<div class="a" style="left:677px;top:125px;width:1px;height:34px;background:#4A64A8"></div>
<div class="t" style="left:769px;top:107px;font-size:9px;letter-spacing:-0.1px;transform:scaleX(0.88);transform-origin:0 0;color:#2E4C7C">6.0</div>
<div class="a" style="left:773px;top:125px;width:1px;height:34px;background:#4A64A8"></div>
<div class="t" style="left:865px;top:107px;font-size:9px;letter-spacing:-0.1px;transform:scaleX(0.88);transform-origin:0 0;color:#2E4C7C">7.0</div>
<div class="a" style="left:869px;top:125px;width:1px;height:34px;background:#4A64A8"></div>
<div class="t" style="left:961px;top:107px;font-size:9px;letter-spacing:-0.1px;transform:scaleX(0.88);transform-origin:0 0;color:#2E4C7C">8.0</div>
<div class="a" style="left:965px;top:125px;width:1px;height:34px;background:#4A64A8"></div>
<!-- scrollbar -->
<div class="a" style="left:116px;top:222px;width:902px;height:18px;background:linear-gradient(90deg,#F2F1EA,#FEFEFC 50%,#F4F3EC)"></div>
<div class="a" style="left:118px;top:223px;width:15px;height:15px;border-radius:2px;background:linear-gradient(135deg,#D6E2FC,#B8CDF8);border:1px solid #C2D3F6"></div>
<svg style="left:122px;top:227px" width="6" height="8"><path d="M5 0.5 L1.5 4 L5 7.5" fill="none" stroke="#4D6185" stroke-width="2"/></svg>
<div class="a" style="left:135px;top:223px;width:432px;height:16px;border-radius:2px;background:linear-gradient(90deg,#C8D6FC,#BBD0FA 70%,#ADC4F6);border:1px solid #fff;box-shadow:inset -1px -1px #9CB4E6"></div>
<div class="a" style="left:347px;top:227px;width:8px;height:8px;background:repeating-linear-gradient(90deg,#EEF4FE 0,#EEF4FE 1px,#8CA6DA 1px,#8CA6DA 2px)"></div>
<div class="a" style="left:1001px;top:223px;width:15px;height:15px;border-radius:2px;background:linear-gradient(135deg,#D6E2FC,#B8CDF8);border:1px solid #C2D3F6"></div>
<svg style="left:1006px;top:227px" width="6" height="8"><path d="M1 0.5 L4.5 4 L1 7.5" fill="none" stroke="#4D6185" stroke-width="2"/></svg>
<!-- timeline bottom lines -->
<div class="a" style="left:0;top:245px;width:1024px;height:1px;background:#A8A698"></div>
<div class="a" style="left:0;top:246px;width:1024px;height:1px;background:#FCFCF6"></div>
<div class="a" style="left:0;top:249px;width:1024px;height:1px;background:#B4B0A0"></div>
<!-- ===== OUTLINE PANEL ===== -->
<div class="a" style="left:0;top:250px;width:193px;height:465px;background:#ECE9D8"></div>
<div class="a" style="left:3px;top:270px;width:186px;height:444px;background:#FAFAF8"></div>
<div class="a" style="left:3px;top:253px;width:155px;height:15px;background:linear-gradient(90deg,#7A9AE6,#88A6EC)"></div>
<div class="t" style="left:7px;top:255px;color:#E4ECFF">Outline</div>
<svg style="left:165px;top:259px" width="5" height="3"><path d="M0 3 L2.5 0 L5 3 Z" fill="#B8B6AA"/></svg>
<svg style="left:179px;top:257px" width="7" height="6"><path d="M0.5 0.5 L6.5 5.5 M6.5 0.5 L0.5 5.5" stroke="#000" stroke-width="1.5"/></svg>
<div class="t" style="left:7px;top:277px">Insert</div>
<svg style="left:44px;top:280px" width="7" height="4"><path d="M0 0 H7 L3.5 4 Z" fill="#000"/></svg>
<svg style="left:60px;top:277px" width="14" height="12"><path d="M1 0.5 L13 11.5 M13 0.5 L1 11.5" stroke="#8C1010" stroke-width="2"/></svg>
<svg style="left:83px;top:277px" width="12" height="12"><path d="M6 0 L11 5 H8 V12 H4 V5 H1 Z" fill="#A8A8A0"/></svg>
<svg style="left:106px;top:277px" width="12" height="12"><path d="M6 12 L1 7 H4 V2 C4 0.5 5.5 0 8.5 0 H11 V3 H8 V7 H11 Z" fill="#A8A8A0"/></svg>
<!-- tree box -->
<div class="a" style="left:3px;top:295px;width:185px;height:414px;background:#fff;border:1px solid #7D8A98"></div>
<div class="a" style="left:12px;top:301px;width:9px;height:9px;border:1px solid #919B9C;background:linear-gradient(135deg,#fff,#E0DED4)"></div>
<div class="a" style="left:14px;top:305px;width:5px;height:1px;background:#000"></div>
<div class="a" style="left:27px;top:297px;width:16px;height:16px;border:1px solid #A0A090;background:#fff"></div>
<svg style="left:29px;top:299px" width="12" height="12"><path d="M1 4.5 L10 1 L11 3 L2 6.5 Z" fill="#E8E040" stroke="#000" stroke-width="0.7"/><path d="M3.5 3.5 L4.5 5.5 M6.5 2.3 L7.5 4.3 M9 1.4 L10 3.4" stroke="#000" stroke-width="1"/><rect x="1.5" y="6" width="10" height="6" fill="#000"/><path d="M2.5 8 H10.5 M2.5 10 H10.5" stroke="#30B030" stroke-dasharray="1 1" stroke-width="0.9"/></svg>
<div class="a" style="left:46px;top:297px;width:57px;height:16px;background:#316AC5"></div>
<div class="t" style="left:49px;top:300px;color:#fff;font-weight:bold;letter-spacing:0.5px">Scene_1</div>
<div class="a" style="left:35px;top:313px;width:1px;height:9px;border-left:1px dotted #8A8A8A"></div>
<div class="a" style="left:36px;top:321px;width:11px;height:1px;border-top:1px dotted #8A8A8A"></div>
<svg style="left:47px;top:315px" width="16" height="11"><path d="M0 5.5 C3 0 13 0 16 5.5 C13 11 3 11 0 5.5 Z" fill="#6A6A6A"/><circle cx="8" cy="5.5" r="3" fill="#222"/><path d="M2 3 L14 8 M3 1.5 L13 9.5" stroke="#9A9A9A" stroke-width="0.8"/></svg>
<svg style="left:64px;top:314px" width="14" height="14"><rect x="0" y="6" width="7" height="5.5" fill="#E01010" stroke="#600" stroke-width="0.5"/><path d="M7 0 L11 6.5 H3 Z" fill="#F0D020" stroke="#806000" stroke-width="0.5"/><circle cx="10" cy="10" r="3.6" fill="#20C020" stroke="#006000" stroke-width="0.6"/></svg>
<div class="t" style="left:85px;top:316px;font-style:italic">12e5e6eb44.jpg</div>
<!-- panel bottom -->
<div class="a" style="left:188px;top:250px;width:1px;height:465px;background:#F4F3EE"></div>

<!-- splitter 1 -->
<div class="a" style="left:193px;top:250px;width:1px;height:465px;background:#C4C1B2"></div>
<div class="a" style="left:194px;top:250px;width:4px;height:465px;background:#F8F7F2"></div>
<div class="a" style="left:198px;top:250px;width:1px;height:462px;background:#716F64"></div>

<!-- ===== SCRIPT PANEL ===== -->
<div class="a" style="left:199px;top:250px;width:556px;height:462px;background:#FBFBF9;border-top:1px solid #6A6A5A;border-right:1px solid #9A988A;border-bottom:1px solid #9A988A"></div>
<div class="a" style="left:199px;top:251px;width:555px;height:20px;background:#ECE9D8"></div>
<div class="a" style="left:199px;top:271px;width:555px;height:1px;background:#919B9C"></div>
<!-- layout tab -->
<div class="a" style="left:202px;top:253px;width:97px;height:19px;border:1px solid #919B9C;border-bottom:none;border-radius:3px 3px 0 0;background:linear-gradient(#FFFFFF,#F3F2EC 70%,#E6E4DA)"></div>
<div class="t" style="left:210px;top:258px;letter-spacing:-0.15px">Layout : Scene_1</div>
<!-- script tab active -->
<div class="a" style="left:298px;top:251px;width:46px;height:21px;border:1px solid #919B9C;border-bottom:none;border-radius:3px 3px 0 0;background:#FBFBF9"></div>
<div class="a" style="left:298px;top:251px;width:46px;height:3px;background:linear-gradient(#E68B2C,#FFC73C);border-radius:3px 3px 0 0"></div>
<div class="t" style="left:306px;top:256px">Script</div>
<!-- script toolbar -->
<div class="t" style="left:207px;top:279px">Add Script</div>
<svg style="left:262px;top:283px" width="7" height="4"><path d="M0 0 H7 L3.5 4 Z" fill="#000"/></svg>
<svg style="left:277px;top:278px" width="14" height="13"><rect x="0.5" y="0.5" width="13" height="12" fill="#fff" stroke="#000"/><rect x="1" y="1" width="12" height="3" fill="#203090"/><path d="M2 6.5 H12 M2 8.5 H12" stroke="#000" stroke-width="0.8"/><path d="M4 10.5 H8" stroke="#2020C0"/></svg>
<svg style="left:298px;top:278px" width="14" height="13"><rect x="0.5" y="0.5" width="13" height="12" fill="#fff" stroke="#000"/><path d="M4.5 0.5 V12.5" stroke="#000"/><path d="M1.5 3 H3.5 M1.5 5.5 H3.5 M1.5 8 H3.5 M1.5 10.5 H3.5" stroke="#000"/><path d="M6 3 H12 M6 5.5 H12 M6 8 H12 M6 10.5 H12" stroke="#2020C0"/></svg>
<div class="a" style="left:316px;top:273px;width:21px;height:22px;border:1px solid #8FA8D0;border-radius:3px;background:linear-gradient(#F2F4FA,#E2E6F0)"></div>
<svg style="left:320px;top:278px" width="14" height="13"><rect x="0.5" y="0.5" width="13" height="12" fill="#fff" stroke="#000"/><path d="M3 3.5 H7 M3 5.5 H11 M5 7.5 H11 M3 9.5 H11" stroke="#2020C0"/></svg>
<div class="t" style="left:341px;top:279px"><u>E</u>xpert</div>
<svg style="left:379px;top:283px" width="7" height="4"><path d="M0 0 H7 L3.5 4 Z" fill="#000"/></svg>
<!-- code box -->
<div class="a" style="left:203px;top:296px;width:549px;height:414px;background:#fff;border:1px solid #7D8A98"></div>
<div class="t" style="left:206px;top:301px;font-family:'Liberation Mono',monospace;font-size:11.67px;line-height:15px;color:#A81818">onEnterFrame() {
}
time=new Date();
a = time.getSeconds();
x = time.getMonth();
h = time.getHours()</div>
<!-- v scroll -->
<div class="a" style="left:735px;top:298px;width:14px;height:393px;background:linear-gradient(90deg,#F3F2EC,#FCFCFA 60%,#F0EFE8)"></div>
<div class="a" style="left:735px;top:299px;width:14px;height:15px;border:1px solid #F4F3EE;border-radius:2px;background:linear-gradient(135deg,#F8F7F2,#E8E6DC)"></div>
<svg style="left:738px;top:304px" width="8" height="5"><path d="M0.5 4.5 L4 1 L7.5 4.5" fill="none" stroke="#C4C2B8" stroke-width="1.8"/></svg>
<div class="a" style="left:735px;top:675px;width:14px;height:15px;border:1px solid #F4F3EE;border-radius:2px;background:linear-gradient(135deg,#F8F7F2,#E8E6DC)"></div>
<svg style="left:738px;top:680px" width="8" height="5"><path d="M0.5 0.5 L4 4 L7.5 0.5" fill="none" stroke="#C4C2B8" stroke-width="1.8"/></svg>
<!-- h scroll -->
<div class="a" style="left:204px;top:691px;width:531px;height:17px;background:linear-gradient(#F0EFE8,#FAFAF6 60%,#F4F3EE)"></div>
<div class="a" style="left:206px;top:693px;width:15px;height:14px;border:1px solid #F4F3EE;border-radius:2px;background:linear-gradient(135deg,#F8F7F2,#E8E6DC)"></div>
<svg style="left:211px;top:696px" width="5" height="8"><path d="M4.5 0.5 L1 4 L4.5 7.5" fill="none" stroke="#C4C2B8" stroke-width="1.8"/></svg>
<div class="a" style="left:717px;top:693px;width:15px;height:14px;border:1px solid #F4F3EE;border-radius:2px;background:linear-gradient(135deg,#F8F7F2,#E8E6DC)"></div>
<svg style="left:722px;top:696px" width="5" height="8"><path d="M0.5 0.5 L4 4 L0.5 7.5" fill="none" stroke="#C4C2B8" stroke-width="1.8"/></svg>
<div class="a" style="left:735px;top:691px;width:14px;height:17px;background:#EDEBE0"></div>

<!-- splitter 2 -->
<div class="a" style="left:755px;top:250px;width:10px;height:465px;background:#ECE9D8"></div>
<div class="a" style="left:757px;top:250px;width:1px;height:465px;background:#F8F7F2"></div>
<div class="a" style="left:759px;top:250px;width:1px;height:465px;background:#9A988A"></div>

<!-- ===== DEBUG PANEL ===== -->
<div class="a" style="left:760px;top:250px;width:264px;height:465px;background:#ECE9D8"></div>
<div class="a" style="left:765px;top:253px;width:224px;height:15px;background:linear-gradient(90deg,#7A9AE6,#88A6EC)"></div>
<div class="t" style="left:768px;top:255px;color:#E4ECFF">Debug</div>
<svg style="left:996px;top:259px" width="5" height="3"><path d="M0 3 L2.5 0 L5 3 Z" fill="#B8B6AA"/></svg>
<svg style="left:1010px;top:257px" width="7" height="6"><path d="M0.5 0.5 L6.5 5.5 M6.5 0.5 L0.5 5.5" stroke="#000" stroke-width="1.5"/></svg>
<!-- tabs row 1 -->
<div class="a" style="left:767px;top:273px;width:58px;height:19px;border:1px solid #919B9C;border-radius:3px 3px 0 0;background:linear-gradient(#FFFFFF,#F3F2EC 70%,#E6E4DA)"></div>
<div class="a" style="left:826px;top:273px;width:58px;height:19px;border:1px solid #919B9C;border-radius:3px 3px 0 0;background:linear-gradient(#FFFFFF,#F3F2EC 70%,#E6E4DA)"></div>
<div class="a" style="left:885px;top:273px;width:74px;height:19px;border:1px solid #919B9C;border-radius:3px 3px 0 0;background:linear-gradient(#FFFFFF,#F3F2EC 70%,#E6E4DA)"></div>
<div class="a" style="left:960px;top:273px;width:56px;height:19px;border:1px solid #919B9C;border-radius:3px 3px 0 0;background:linear-gradient(#FFFFFF,#F3F2EC 70%,#E6E4DA)"></div>
<div class="t" style="left:781px;top:278px">Movie</div>
<div class="t" style="left:841px;top:278px">Text</div>
<div class="t" style="left:899px;top:278px">Transform</div>
<div class="t" style="left:974px;top:278px">Tint</div>
<!-- tabs row 2 -->
<div class="a" style="left:767px;top:291px;width:47px;height:19px;border:1px solid #919B9C;border-radius:3px 3px 0 0;background:linear-gradient(#FFFFFF,#F3F2EC 70%,#E6E4DA)"></div>
<div class="a" style="left:815px;top:291px;width:50px;height:19px;border:1px solid #919B9C;border-radius:3px 3px 0 0;background:linear-gradient(#FFFFFF,#F3F2EC 70%,#E6E4DA)"></div>
<div class="a" style="left:866px;top:291px;width:54px;height:19px;border:1px solid #919B9C;border-radius:3px 3px 0 0;background:linear-gradient(#FFFFFF,#F3F2EC 70%,#E6E4DA)"></div>
<div class="a" style="left:921px;top:291px;width:47px;height:19px;border:1px solid #919B9C;border-radius:3px 3px 0 0;background:linear-gradient(#FFFFFF,#F3F2EC 70%,#E6E4DA)"></div>
<div class="t" style="left:775px;top:296px">Align</div>
<div class="t" style="left:823px;top:296px">Guides</div>
<div class="t" style="left:874px;top:296px">Content</div>
<div class="t" style="left:929px;top:296px">Export</div>
<!-- content box -->
<div class="a" style="left:765px;top:309px;width:253px;height:400px;background:#FBFBF9;border:1px solid #919B9C"></div>
<!-- debug tab active -->
<div class="a" style="left:967px;top:289px;width:51px;height:22px;border:1px solid #919B9C;border-bottom:none;border-radius:3px 3px 0 0;background:#FBFBF9"></div>
<div class="a" style="left:967px;top:289px;width:51px;height:3px;background:linear-gradient(#E68B2C,#FFC73C);border-radius:3px 3px 0 0"></div>
<div class="t" style="left:978px;top:294px">Debug</div>
<!-- checkboxes -->
<div class="a" style="left:771px;top:317px;width:13px;height:13px;border:1px solid #1C5180;background:linear-gradient(135deg,#DCDCD7,#F4F3EE 60%,#FFFFFF)"></div>
<div class="t" style="left:788px;top:318px">Echo script</div>
<div class="a" style="left:852px;top:317px;width:13px;height:13px;border:1px solid #1C5180;background:linear-gradient(135deg,#DCDCD7,#F4F3EE 60%,#FFFFFF)"></div>
<div class="t" style="left:869px;top:318px">Echo bytecodes</div>
<!-- buttons -->
<div class="a" style="left:772px;top:335px;width:79px;height:18px;border:1px solid #2A4A6E;border-radius:3px;background:linear-gradient(#FFFFFF,#F4F3EE 60%,#DEDCD2)"></div>
<div class="t" style="left:782px;top:339px">Stop Output</div>
<div class="a" style="left:772px;top:354px;width:79px;height:20px;border:1px solid #2A4A6E;border-radius:3px;background:linear-gradient(#FFFFFF,#F4F3EE 60%,#DEDCD2)"></div>
<div class="t" style="left:799px;top:358px">Clear</div>
<!-- output box -->
<div class="a" style="left:768px;top:374px;width:248px;height:331px;background:#fff;border:1px solid #7D8A98"></div>
<div class="a" style="left:998px;top:376px;width:15px;height:327px;background:linear-gradient(90deg,#F3F2EC,#FCFCFA 60%,#F0EFE8)"></div>
<div class="a" style="left:999px;top:377px;width:14px;height:15px;border:1px solid #F4F3EE;border-radius:2px;background:linear-gradient(135deg,#F8F7F2,#E8E6DC)"></div>
<svg style="left:1002px;top:382px" width="8" height="5"><path d="M0.5 4.5 L4 1 L7.5 4.5" fill="none" stroke="#C4C2B8" stroke-width="1.8"/></svg>
<div class="a" style="left:999px;top:687px;width:14px;height:16px;border:1px solid #F4F3EE;border-radius:2px;background:linear-gradient(135deg,#F8F7F2,#E8E6DC)"></div>
<svg style="left:1002px;top:693px" width="8" height="5"><path d="M0.5 0.5 L4 4 L7.5 0.5" fill="none" stroke="#C4C2B8" stroke-width="1.8"/></svg>
<!-- STATUS BAR -->
<div class="a" style="left:0;top:714px;width:1024px;height:1px;background:#C8C4B0"></div>
<div class="a" style="left:0;top:715px;width:1024px;height:1px;background:#A29E8A"></div>
<div class="a" style="left:0;top:716px;width:1024px;height:18px;background:linear-gradient(#EDEEDD,#E8E6D6 50%,#E4DCCA 85%,#E8E8D8)"></div>
<div class="t" style="left:873px;top:721px">x=-2.1 y=114.0</div>
<div class="a" style="left:946px;top:718px;width:1px;height:15px;background:#C8C4B0"></div>
<div class="a" style="left:947px;top:718px;width:1px;height:15px;background:#fff"></div>
<div class="a" style="left:951px;top:717px;width:54px;height:16px;overflow:hidden"><div class="t" style="left:1px;top:4px">Unknown S</div></div>

<!-- TASKBAR -->
<div class="a" style="left:0;top:734px;width:1024px;height:34px;background:linear-gradient(#1F4A9E 0px,#1F4A9E 1px,#3A7EE0 1px,#3A7EE0 4px,#2468D8 4px,#2468D8 5px,#4A90F2 6px,#3E84EA 7px,#2458D0 10px,#2055D8 14px,#2258DA 26px,#2462DE 30px,#1E4CBA 32px,#1A45B0 34px)"></div>
<!-- tray -->
<div class="a" style="left:0;top:738px;width:88px;height:30px;background:linear-gradient(#0C70D0 0px,#18A6F8 1px,#16A0F4 3px,#0E8EEA 8px,#0C88E6 24px,#0A78D8 28px,#0860C0 30px);border-right:1px solid #1050B8"></div>
<div class="t" style="left:13px;top:746px;color:#fff;font-size:11px;unicode-bidi:bidi-override;direction:ltr">ص ٠٤:٠٨</div>
<svg style="left:61px;top:745px" width="14" height="15"><rect x="0" y="3" width="10" height="10" fill="#5A3A6A" stroke="#1A1A2A" stroke-width="0.8"/><rect x="4" y="0" width="10" height="10" fill="#7A5A8A" stroke="#1A1A2A" stroke-width="0.8"/><rect x="5" y="1" width="8" height="8" fill="#2A2A4A"/><rect x="1" y="4" width="8" height="8" fill="#3A2A4A"/><path d="M1 13 H10" stroke="#D0A0C0" stroke-width="2"/></svg>
<div class="a" style="left:78px;top:745px;width:18px;height:17px;border-radius:50%;background:radial-gradient(circle at 40% 35%,#6AB4FA,#2A7CE6 60%,#1A5CC8);border:1px solid #C8E0FF"></div>
<svg style="left:84px;top:749px" width="6" height="9"><path d="M1 1 L4.5 4.5 L1 8" fill="none" stroke="#fff" stroke-width="2"/></svg>
<!-- task buttons -->
<div class="a" style="left:442px;top:742px;width:160px;height:23px;border-radius:3px;background:linear-gradient(#1A44B0,#1E4CBE 30%,#1E4EC2);box-shadow:inset 1px 1px #153A96,inset -1px -1px #3464D2"></div>
<div class="t" style="left:466px;top:748px;color:#fff">Movie1 * - SWiSHmax</div>
<svg style="left:576px;top:746px" width="15" height="17" viewBox="0 0 15 17">
<path d="M6 1 C8.5 1.5 10.5 6 13.8 15.5 L10 15 L7.5 12.5 L4.5 15 L1.5 16.5 L0.8 10 C1 5 3 1 6 1 Z" fill="#F26A18" stroke="#F8B080" stroke-width="0.6"/>
<path d="M8.2 6 C6.5 4.5 3 5 3 7 C3 9 7.5 8.5 7.5 10.5 C7.5 12.5 3.5 13 2 11.5" fill="none" stroke="#FFE4C0" stroke-width="1.5"/>
<path d="M1.5 14.5 H4.5 V16.5 H1.5 Z" fill="#F0F8FF"/>
</svg>
<div class="a" style="left:603px;top:742px;width:158px;height:23px;border-radius:3px;background:linear-gradient(#3C81F3,#3476EE 20%,#3070EA 80%,#2A62DA);box-shadow:inset -1px -1px #1A48B0,inset 1px 1px #5C9CFF"></div>
<div class="t" style="left:619px;top:748px;color:#fff;letter-spacing:-0.3px">...Macromedia Flash Pla</div>
<div class="a" style="left:737px;top:746px;width:16px;height:16px;border-radius:50%;background:radial-gradient(circle at 40% 35%,#fff,#C8C8C8 70%,#707070)"></div>
<svg style="left:740px;top:748px" width="10" height="12"><path d="M8.5 1 C5 1 5 3 4.5 6 C4 9 3.5 10.5 1 10.5" fill="none" stroke="#000" stroke-width="1.6"/><path d="M3 5.5 H7" stroke="#000" stroke-width="1.3"/></svg>
<div class="a" style="left:763px;top:742px;width:158px;height:23px;border-radius:3px;background:linear-gradient(#3C81F3,#3476EE 20%,#3070EA 80%,#2A62DA);box-shadow:inset -1px -1px #1A48B0,inset 1px 1px #5C9CFF"></div>
<div class="t" style="left:779px;top:748px;color:#fff;transform:scaleX(0.925);transform-origin:0 0">...Po - :: <b>منتديات عرايس</b> ::</div>
<svg style="left:897px;top:746px" width="16" height="16"><path d="M3 0.5 H11 L15 4.5 V15.5 H3 Z" fill="#F4F4F0" stroke="#6A6A6A" stroke-width="0.8"/><path d="M1 9 C1 4 9 3 11 6 C12 8 11 11 7 12 C4 12.5 2 11 3 9 H10" fill="none" stroke="#1A4AB8" stroke-width="2"/></svg>
<!-- grip -->
<div class="a" style="left:928px;top:744px;width:4px;height:20px;background:repeating-linear-gradient(#1A3A90 0,#1A3A90 2px,transparent 2px,transparent 4px)"></div>
<!-- start -->
<div class="a" style="left:941px;top:737px;width:90px;height:31px;border-radius:0 0 0 0;border-top-left-radius:12px 18px;border-bottom-left-radius:0;background:linear-gradient(#6ABA6A 0px,#48A848 3px,#3C9C3C 10px,#38983A 22px,#2E8A30 28px,#2A7A2C 31px);box-shadow:inset 2px 0 #50A850"></div>
<div class="t" style="left:966px;top:743px;color:#fff;font-size:15px;font-style:italic;text-shadow:1px 1px #1A4A1A;transform:scaleX(0.9);transform-origin:0 0">ابدأ</div>
<svg style="left:989px;top:743px" width="19" height="18"><path d="M1 3 C3 1 6 1 9 2.5 L8 8.5 C5 7 3 7 0 8.5 Z" fill="#F0682A"/><path d="M10 2.5 C13 4 16 4 19 2 L18 8 C15 10 12 10 9 8.5 Z" fill="#7AC030"/><path d="M0 9.5 C3 8 5 8 8 9.5 L7 15.5 C4 14 2 14 -1 15.5 Z" fill="#3A8AE8"/><path d="M9 9.5 C12 11 15 11 18 9 L17 15 C14 17 11 17 8 15.5 Z" fill="#F8C020"/></svg>
</body></html>
